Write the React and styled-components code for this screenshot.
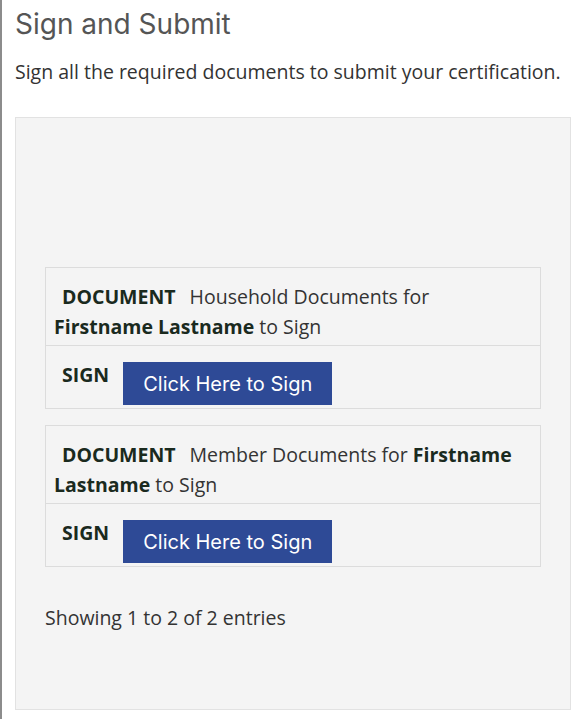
import React from "react";
import styled, { createGlobalStyle } from "styled-components";

const Global = createGlobalStyle`
  html, body { margin: 0; padding: 0; background: #ffffff; }
  body {
    border-left: 2px solid #8c8c8c;
    min-height: 719px;
    box-sizing: border-box;
    font-family: "Open Sans", "Liberation Sans", sans-serif;
    color: #333;
  }
`;

const Page = styled.div`
  padding: 0 14px 9px 13px;
`;

const Title = styled.h1`
  margin: 0;
  padding-top: 6px;
  font-family: "Inter", "Roboto", sans-serif;
  font-weight: 400;
  font-size: 28px;
  line-height: 36px;
  color: #555;
`;

const Lead = styled.p`
  margin: 16px 0 0;
  font-size: 19.5px;
  line-height: 28px;
  color: #333;
`;

const Panel = styled.section`
  margin-top: 31px;
  background: #f4f4f4;
  border: 1px solid #e2e2e2;
  padding: 149px 29px 0 29px;
  height: 593px;
  box-sizing: border-box;
`;

const Record = styled.div`
  border: 1px solid #dcdcdc;
  & + & { margin-top: 16px; }
`;

const Cell = styled.div`
  padding: 14px 8px 3px;
  font-size: 19.5px;
  line-height: 30px;
  color: #333;
  display: ${(p) => (p.$flex ? "flex" : "block")};
  align-items: flex-start;
  & + & { border-top: 1px solid #dcdcdc; }
`;

const Label = styled.b`
  font-weight: 700;
  color: #1a2a1e;
  padding: 0 14px 0 8px;
`;

const Strong = styled.b`
  font-weight: 700;
  color: #1a2a1e;
`;

const SignButton = styled.button`
  margin-top: 2px;
  height: 43px;
  padding: 0 20px;
  border: none;
  border-radius: 0;
  background: #2e4a96;
  color: #fff;
  font-family: "Inter", "Roboto", sans-serif;
  font-size: 20px;
  cursor: pointer;
`;

const Info = styled.div`
  margin-top: 36px;
  font-size: 19.5px;
  line-height: 30px;
  color: #333;
`;

export default function App() {
  return (
    <Page>
      <Global />
      <Title>Sign and Submit</Title>
      <Lead>Sign all the required documents to submit your certification.</Lead>
      <Panel>
        <Record>
          <Cell>
            <Label>DOCUMENT</Label>
            Household Documents for <Strong>Firstname Lastname</Strong> to Sign
          </Cell>
          <Cell $flex>
            <Label>SIGN</Label>
            <SignButton>Click Here to Sign</SignButton>
          </Cell>
        </Record>
        <Record>
          <Cell>
            <Label>DOCUMENT</Label>
            Member Documents for <Strong>Firstname Lastname</Strong> to Sign
          </Cell>
          <Cell $flex>
            <Label>SIGN</Label>
            <SignButton>Click Here to Sign</SignButton>
          </Cell>
        </Record>
        <Info>Showing 1 to 2 of 2 entries</Info>
      </Panel>
    </Page>
  );
}
